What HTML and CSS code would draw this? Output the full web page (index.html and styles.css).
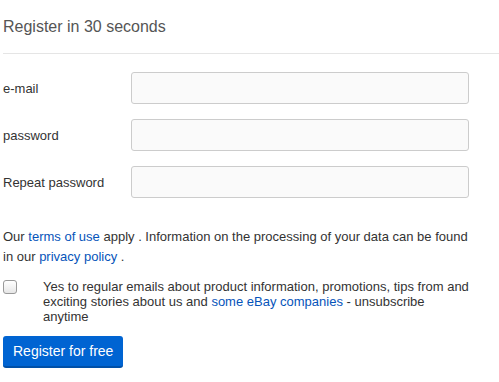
FILE: index.html
```html
<!DOCTYPE html>
<html>
<head>
<meta charset="utf-8">
<link rel="stylesheet" href="styles.css">
</head>
<body>
<div class="page">
  <h2 class="title">Register in 30 seconds</h2>
  <form class="form">
    <div class="row">
      <label class="label">e-mail</label>
      <input class="input" type="text">
    </div>
    <div class="row">
      <label class="label">password</label>
      <input class="input" type="password">
    </div>
    <div class="row">
      <label class="label">Repeat password</label>
      <input class="input" type="password">
    </div>
    <p class="legal">Our <a href="#">terms of use</a> apply . Information on the processing of your data can be found in our <a href="#">privacy policy</a> .</p>
    <div class="optin">
      <span class="check"></span>
      <span class="optin-text">Yes to regular emails about product information, promotions, tips from and exciting stories about us and <a href="#">some eBay companies</a> - unsubscribe anytime</span>
    </div>
    <button class="btn" type="button">Register for free</button>
  </form>
</div>
</body>
</html>
```
FILE: styles.css
```css
html, body {
  margin: 0;
  padding: 0;
  background: #fff;
}
body {
  font-family: Arial, "Liberation Sans", sans-serif;
  color: #333;
}
.page {
  padding: 0 0 0 3px;
}
.title {
  margin: 0;
  padding: 17px 0 16px;
  font-size: 16px;
  font-weight: normal;
  color: #555;
  border-bottom: 1px solid #e5e5e5;
  line-height: 20px;
}
.form {
  padding-top: 18px;
}
.row {
  display: flex;
  align-items: center;
  height: 32px;
  margin-bottom: 15px;
}
.label {
  width: 128px;
  font-size: 13px;
  color: #333;
}
.input {
  box-sizing: border-box;
  width: 338px;
  height: 32px;
  border: 1px solid #ccc;
  border-radius: 3px;
  background: #fafafa;
  margin: 0;
}
.legal {
  margin: 29px 0 0;
  font-size: 13px;
  line-height: 20px;
  width: 470px;
  color: #333;
}
a {
  color: #0654ba;
  text-decoration: none;
}
.optin {
  display: flex;
  margin-top: 12px;
  width: 470px;
}
.check {
  box-sizing: border-box;
  flex: none;
  width: 14px;
  height: 14px;
  border: 1px solid #999;
  border-radius: 3px;
  background: linear-gradient(#fff, #e6e6e6);
  margin: 1px 26px 0 0;
}
.optin-text {
  font-size: 13px;
  line-height: 15px;
}
.btn {
  margin-top: 12px;
  height: 32px;
  padding: 0 10px;
  background: #0064d2;
  color: #fff;
  font-family: Arial, "Liberation Sans", sans-serif;
  font-size: 14px;
  border: none;
  border-bottom: 2px solid #0050a8;
  border-radius: 3px;
}
```
